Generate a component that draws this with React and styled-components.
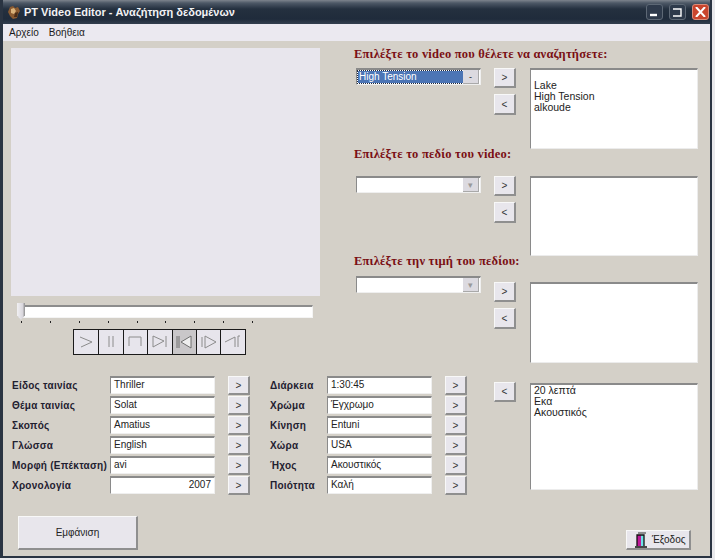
import React from "react";
import styled, { createGlobalStyle } from "styled-components";

const GlobalStyle = createGlobalStyle`
  html, body {
    margin: 0;
    padding: 0;
    background: #e9e9ec;
    font-family: "Liberation Sans", Tahoma, sans-serif;
  }
`;

const leftFields = [
  ["Είδος ταινίας", "Thriller"],
  ["Θέμα ταινίας", "Solat"],
  ["Σκοπός", "Amatius"],
  ["Γλώσσα", "English"],
  ["Μορφή (Επέκταση)", "avi"],
  ["Χρονολογία", "2007", true],
];

const rightFields = [
  ["Διάρκεια", "1:30:45"],
  ["Χρώμα", "Έγχρωμο"],
  ["Κίνηση", "Entuni"],
  ["Χώρα", "USA"],
  ["Ήχος", "Ακουστικός"],
  ["Ποιότητα", "Καλή"],
];

// thin grey strokes of the player buttons
const transport = [
  "M4 5 L16 10 L5 15",
  "M8 4 V15 M12 4 V15",
  "M4 5 H16 V14 M4 5 V14",
  "M3 4 V15 L14 9 L3 4 M16 4 V15",
  "M3 4 V16 M5 4 V16 M17 4 L7 10 L17 16 Z",
  "M3 5 V15 M6 4 V16 L17 10 L6 4",
  "M2 10 L12 5 V15 M15 4 V15 M15 4 H17",
];

const Window = styled.div`
  width: 712px;
  height: 558px;
  box-sizing: border-box;
  display: flex;
  flex-direction: column;
  background: #d4d0c8;
  border-left: 3px solid #2a3442;
  border-right: 2px solid #2a3442;
  border-bottom: 2px solid #2a3442;
  overflow: hidden;
`;

const TitleBar = styled.div`
  height: 24px;
  margin-left: -3px;
  margin-right: -2px;
  padding: 0 3px 0 7px;
  flex: none;
  display: flex;
  align-items: center;
  gap: 3px;
  background: linear-gradient(#7d848d 0, #4d5866 3px, #24303f 9px, #1f2b3b 19px, #323e4e 24px);
`;

const TitleText = styled.span`
  flex: 1;
  color: #f2f2f4;
  font-size: 11px;
  font-weight: bold;
`;

const CaptionButton = styled.div`
  width: 17px;
  height: 16px;
  margin-left: 3px;
  box-sizing: border-box;
  border: 1px solid ${(p) => (p.$close ? "#d98a78" : "#5d6875")};
  border-radius: 3px;
  background: ${(p) => (p.$close ? "#c9452d" : "#2e3a4b")};
  display: flex;
  align-items: center;
  justify-content: center;
`;

const MenuBar = styled.div`
  height: 17px;
  flex: none;
  padding-left: 6px;
  display: flex;
  align-items: center;
  gap: 10px;
  background: #ebe9f0;
  color: #1a1a1a;
  font-size: 10px;
`;

const Top = styled.div`
  display: grid;
  grid-template-columns: 343px 1fr;
`;

const PlayerColumn = styled.div`
  padding: 7px 0 0 8px;
`;

const VideoPanel = styled.div`
  width: 309px;
  height: 248px;
  background: #e8e6ed;
`;

const Slider = styled.div`
  position: relative;
  width: 295px;
  height: 13px;
  margin: 9px 0 0 7px;
  box-sizing: border-box;
  background: #fff;
  border-top: 2px solid #8d8d8d;
  border-left: 1px solid #b4b4b4;
  border-right: 1px solid #f4f4f4;
  border-bottom: 1px solid #f4f4f4;
`;

const Thumb = styled.div`
  position: absolute;
  left: -2px;
  top: -4px;
  width: 8px;
  height: 17px;
  background: linear-gradient(90deg, #f1f0f3, #d9d7dd 70%, #8b8b8b);
  clip-path: polygon(0 0, 100% 0, 100% 72%, 50% 100%, 0 72%);
`;

const Ticks = styled.div`
  width: 232px;
  height: 2px;
  margin: 3px 0 0 10px;
  display: flex;
  justify-content: space-between;
`;

const Tick = styled.i`
  width: 1px;
  height: 2px;
  background: #222;
`;

const Transport = styled.div`
  width: max-content;
  margin: 6px 0 0 62px;
  display: flex;
  border: 1px solid #1a1a1a;
`;

const TransportButton = styled.div`
  width: 24.4px;
  height: 24px;
  box-sizing: border-box;
  display: flex;
  align-items: center;
  justify-content: center;
  background: ${(p) => (p.$pressed ? "#c9c7c9" : "#e7e5ec")};
  border-left: ${(p) => (p.$first ? "none" : "1px solid #1a1a1a")};
`;

const PickColumn = styled.div`
  display: flex;
  flex-direction: column;
  padding: 8px 0 0 8px;
`;

const Heading = styled.h2`
  margin: 0 0 ${(p) => p.$gap}px;
  height: 10px;
  line-height: 10px;
  color: #7a0f14;
  font-family: "Liberation Serif", "Times New Roman", serif;
  font-size: 12.5px;
  font-weight: bold;
  letter-spacing: 0.2px;
  white-space: nowrap;
`;

const PickRow = styled.div`
  display: grid;
  grid-template-columns: 125px 22px 169px;
  column-gap: 13px;
  margin-left: 2px;
  align-items: start;
`;

const Combo = styled.div`
  height: 17px;
  box-sizing: border-box;
  display: flex;
  padding: 1px;
  background: #fff;
  border-top: 2px solid #8a8a8a;
  border-left: 1px solid #8a8a8a;
  border-right: 1px solid #efefef;
  border-bottom: 1px solid #efefef;
`;

const ComboValue = styled.div`
  flex: 1;
  line-height: 11px;
  font-size: 10px;
  padding-left: 1px;
  color: #fff;
  background: ${(p) => (p.$selected ? "#4c75b5" : "#fff")};
  outline: ${(p) => (p.$selected ? "1px dotted #20283a" : "none")};
`;

const ComboArrow = styled.div`
  width: 15px;
  margin: -1px 0;
  background: #dcdae0;
  border-right: 1px solid #a9a9a9;
  border-bottom: 1px solid #a9a9a9;
  display: flex;
  align-items: center;
  justify-content: center;
  color: ${(p) => (p.$active ? "#222" : "#999")};
  font-size: 9px;
`;

const ButtonStack = styled.div`
  display: flex;
  flex-direction: column;
  gap: 6px;
  margin-top: ${(p) => p.$drop || 0}px;
`;

const ArrowButton = styled.button`
  width: 22px;
  height: ${(p) => p.$height || 20}px;
  padding: 0;
  flex: none;
  background: #e8e6ec;
  color: #333;
  font-family: "Liberation Sans", sans-serif;
  font-size: 10px;
  border: none;
  border-top: 1px solid #f8f8f8;
  border-left: 1px solid #f8f8f8;
  border-right: 2px solid #8f8f8f;
  border-bottom: 2px solid #8f8f8f;
`;

const ListBox = styled.div`
  height: ${(p) => p.$height}px;
  margin-top: ${(p) => p.$drop || 0}px;
  margin-left: 1px;
  box-sizing: border-box;
  padding: ${(p) => p.$pad || 0}px 0 0 3px;
  background: #fff;
  border-top: 2px solid #8a8a8a;
  border-left: 1px solid #8a8a8a;
  border-right: 1px solid #ececec;
  border-bottom: 1px solid #ececec;
  color: #222;
  font-size: 10.5px;
  line-height: 11px;
`;

const Bottom = styled.div`
  display: grid;
  grid-template-columns: 455px 1fr;
  margin-top: 13px;
  padding-left: 9px;
`;

const Form = styled.div`
  display: grid;
  grid-template-columns: 98px 105px 35px 77px 105px 35px;
  grid-auto-rows: 20px;
  align-items: start;
`;

const FieldLabel = styled.label`
  line-height: 20px;
  margin-left: ${(p) => (p.$second ? "20px" : "0")};
  color: #1f2030;
  font-size: 10px;
  font-weight: bold;
  letter-spacing: 0.25px;
  white-space: nowrap;
`;

const FieldInput = styled.div`
  width: 105px;
  height: 18px;
  box-sizing: border-box;
  padding: 0 3px;
  background: #fff;
  color: #222;
  border-top: 2px solid #8a8a8a;
  border-left: 1px solid #8a8a8a;
  border-right: 1px solid #efefef;
  border-bottom: 1px solid #efefef;
  font-size: 10px;
  line-height: 13px;
  text-align: ${(p) => (p.$number ? "right" : "left")};
`;

const FieldButton = styled(ArrowButton)`
  margin-left: 13px;
`;

const Leftovers = styled.div`
  display: grid;
  grid-template-columns: 22px 169px;
  column-gap: 13px;
  margin-left: 27px;
  width: max-content;
  align-items: start;
`;

const Footer = styled.div`
  flex: 1;
  display: flex;
  justify-content: space-between;
  align-items: flex-end;
  padding: 0 19px 6px 15px;
`;

const PreviewButton = styled.button`
  width: 120px;
  height: 34px;
  background: #e8e6ec;
  color: #222;
  font-family: "Liberation Sans", sans-serif;
  font-size: 10px;
  border: none;
  border-top: 1px solid #f8f8f8;
  border-left: 1px solid #f8f8f8;
  border-right: 2px solid #8f8f8f;
  border-bottom: 2px solid #8f8f8f;
`;

const ExitButton = styled(PreviewButton)`
  width: 65px;
  height: 20px;
  padding: 0 0 0 7px;
  display: flex;
  align-items: center;
  gap: 4px;
`;

const AppIcon = () => (
  <svg width="14" height="15" viewBox="0 0 14 15">
    <path d="M3 2 L6 1 L8 3 L11 2 L13 6 L11 9 L10 13 L6 14 L3 11 L1 7 Z" fill="#8a5a30" />
    <path d="M4 4 L7 3 L9 6 L7 9 L4 8 Z" fill="#d9b27a" />
    <path d="M8 8 L11 7 L10 12 L7 12 Z" fill="#4a2c17" />
  </svg>
);

const DoorIcon = () => (
  <svg width="14" height="16" viewBox="0 0 14 16">
    <path d="M4 1 H12" stroke="#333" fill="none" />
    <rect x="3" y="3" width="4" height="11" fill="#c0189a" />
    <rect x="7" y="3" width="3" height="11" fill="#6fe0e8" />
    <path d="M3 14 V3 H10 V14 M1 15 H13" stroke="#111" strokeWidth="1.3" fill="none" />
  </svg>
);

const Field = ({ label, value, number, second }) => (
  <>
    <FieldLabel $second={second}>{label}</FieldLabel>
    <FieldInput $number={number}>{value}</FieldInput>
    <FieldButton $height={19}>&gt;</FieldButton>
  </>
);

export default function App() {
  return (
    <>
      <GlobalStyle />
      <Window>
        <TitleBar>
          <AppIcon />
          <TitleText>PT Video Editor - Αναζήτηση δεδομένων</TitleText>
          <CaptionButton>
            <svg width="11" height="10" viewBox="0 0 11 10">
              <path d="M1 8 H8" stroke="#fff" strokeWidth="2.4" />
            </svg>
          </CaptionButton>
          <CaptionButton>
            <svg width="11" height="10" viewBox="0 0 11 10">
              <path d="M1 2 H9 V9 H1" stroke="#fff" strokeWidth="1.4" fill="none" />
            </svg>
          </CaptionButton>
          <CaptionButton $close>
            <svg width="11" height="10" viewBox="0 0 11 10">
              <path d="M1 0 L10 10 M10 0 L1 10" stroke="#fff" strokeWidth="2" />
            </svg>
          </CaptionButton>
        </TitleBar>
        <MenuBar>
          <span>Αρχείο</span>
          <span>Βοήθεια</span>
        </MenuBar>

        <Top>
          <PlayerColumn>
            <VideoPanel />
            <Slider>
              <Thumb />
            </Slider>
            <Ticks>
              {Array.from({ length: 9 }).map((_, i) => (
                <Tick key={i} />
              ))}
            </Ticks>
            <Transport>
              {transport.map((d, i) => (
                <TransportButton key={d} $first={i === 0} $pressed={i === 4}>
                  <svg width="20" height="20" viewBox="0 0 20 20">
                    <path
                      d={d}
                      fill={i === 4 ? "#eeeeee" : "none"}
                      stroke={i === 4 ? "#6f6f6f" : "#8c8c8c"}
                      strokeWidth="1"
                    />
                  </svg>
                </TransportButton>
              ))}
            </Transport>
          </PlayerColumn>

          <PickColumn>
            <Heading $gap={9}>Επιλέξτε το video που θέλετε να αναζητήσετε:</Heading>
            <PickRow>
              <Combo>
                <ComboValue $selected>High Tension</ComboValue>
                <ComboArrow $active>-</ComboArrow>
              </Combo>
              <ButtonStack>
                <ArrowButton>&gt;</ArrowButton>
                <ArrowButton $height={21}>&lt;</ArrowButton>
              </ButtonStack>
              <ListBox $height={81} $pad={10}>
                Lake
                <br />
                High Tension
                <br />
                alkoude
              </ListBox>
            </PickRow>

            <Heading as="h2" $gap={17}>
              Επιλέξτε το πεδίο του video:
            </Heading>
            <PickRow>
              <Combo>
                <ComboValue />
                <ComboArrow>▾</ComboArrow>
              </Combo>
              <ButtonStack>
                <ArrowButton>&gt;</ArrowButton>
                <ArrowButton $height={21}>&lt;</ArrowButton>
              </ButtonStack>
              <ListBox $height={80} />
            </PickRow>

            <Heading $gap={10}>Επιλέξτε την τιμή του πεδίου:</Heading>
            <PickRow>
              <Combo>
                <ComboValue />
                <ComboArrow>▾</ComboArrow>
              </Combo>
              <ButtonStack $drop={6}>
                <ArrowButton>&gt;</ArrowButton>
                <ArrowButton $height={21}>&lt;</ArrowButton>
              </ButtonStack>
              <ListBox $height={81} $drop={6} />
            </PickRow>
          </PickColumn>
        </Top>

        <Bottom>
          <Form>
            {leftFields.map(([label, value, number], i) => (
              <React.Fragment key={label}>
                <Field label={label} value={value} number={number} />
                <Field label={rightFields[i][0]} value={rightFields[i][1]} second />
              </React.Fragment>
            ))}
          </Form>
          <Leftovers>
            <ButtonStack $drop={6}>
              <ArrowButton>&lt;</ArrowButton>
            </ButtonStack>
            <ListBox $height={107} $drop={7}>
              20 λεπτά
              <br />
              Εκα
              <br />
              Ακουστικός
            </ListBox>
          </Leftovers>
        </Bottom>

        <Footer>
          <PreviewButton>Εμφάνιση</PreviewButton>
          <ExitButton>
            <DoorIcon />
            Έξοδος
          </ExitButton>
        </Footer>
      </Window>
    </>
  );
}
